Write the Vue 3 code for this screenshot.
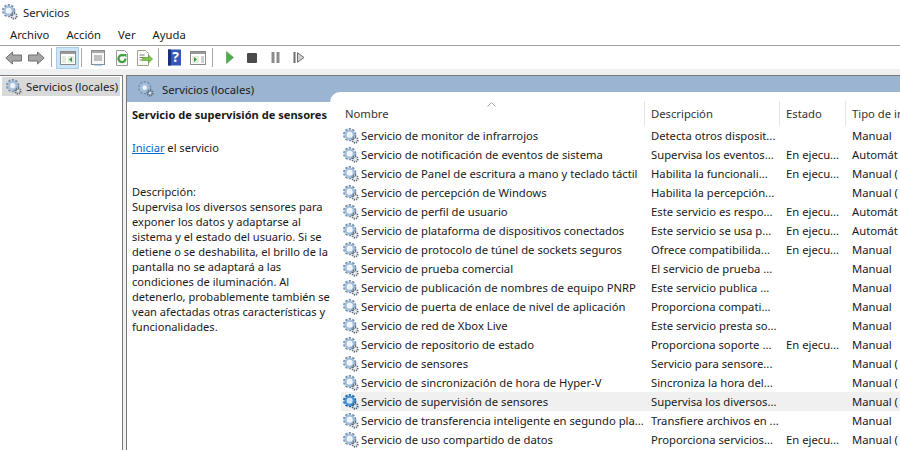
<template>
  <div class="window">
    <svg class="sprite" width="0" height="0">
      <defs>
        <symbol id="gear" viewBox="0 0 18 18">
          <circle cx="7.5" cy="7.5" r="6" fill="none" stroke="#7891a8" stroke-width="3" stroke-dasharray="2.4 1.4" />
          <circle cx="7.5" cy="7.5" r="4.6" fill="none" stroke="#a3bfdc" stroke-width="2.600" />
          <circle cx="7.5" cy="7.5" r="2.6" fill="#eef4fa" />
          <circle cx="13.5" cy="13.5" r="3" fill="none" stroke="#5f6b76" stroke-width="2.200" stroke-dasharray="1.4 0.9" />
          <circle cx="13.5" cy="13.5" r="1.2" fill="#e6e9ec" />
        </symbol>
        <symbol id="gear-on" viewBox="0 0 18 18">
          <circle cx="7.5" cy="7.5" r="6" fill="none" stroke="#1f69ab" stroke-width="3" stroke-dasharray="2.4 1.4" />
          <circle cx="7.5" cy="7.5" r="4.6" fill="none" stroke="#4a94d2" stroke-width="2.600" />
          <circle cx="7.5" cy="7.5" r="2.6" fill="#cfe4f6" />
          <circle cx="13.5" cy="13.5" r="3" fill="none" stroke="#3c5f80" stroke-width="2.200" stroke-dasharray="1.4 0.9" />
          <circle cx="13.5" cy="13.5" r="1.2" fill="#e6e9ec" />
        </symbol>
      </defs>
    </svg>

    <div class="titlebar">
      <svg class="icon"><use href="#gear" /></svg>
      <span>Servicios</span>
    </div>

    <div class="menubar">
      <span v-for="m in menus" :key="m">{{ m }}</span>
    </div>

    <div class="toolbar">
      <svg class="back" width="17" height="14" viewBox="0 0 17 14"><path d="M.8 7 7.500 1v3h9v6h-9v3z" fill="#a6a6a6" stroke="#707070" /></svg>
      <svg class="forward" width="17" height="14" viewBox="0 0 17 14"><path d="M16.200 7 9.500 1v3h-9v6h9v3z" fill="#a6a6a6" stroke="#707070" /></svg>
      <i class="sep after-nav"></i>
      <span class="tb-active">
        <svg width="16" height="14" viewBox="0 0 16 14"><rect x=".5" y=".5" width="15" height="13" fill="#fff" stroke="#8a8a8a" /><rect x="1" y="1" width="14" height="2" fill="#9a9a9a" /><path d="M2 5h4v7H2zM8 5h6v7H8z" fill="#e4ecdc" /><path d="M12 6v5L9 8.500z" fill="#3c9a3c" /></svg>
      </span>
      <i class="sep after-active"></i>
      <svg class="doc" width="16" height="16" viewBox="0 0 16 16"><rect x="1.500" y=".5" width="13" height="14" fill="#f6f6f6" stroke="#8a8a8a" /><rect x="2" y="1" width="12" height="2" fill="#aaa" /><path d="M4 6h8M4 8h8M4 10h8" stroke="#8a8a8a" /><path d="M4 15h8" stroke="#6fa6d6" /></svg>
      <svg class="refresh" width="14" height="16" viewBox="0 0 14 16"><path d="M1.500.5h8l3 3v12h-11z" fill="#fafafa" stroke="#9a9a9a" /><path d="M10.500 8.500a3.500 3.500 0 1 1-1.200-2.600" fill="none" stroke="#3f9f3f" stroke-width="2.200" /><path d="M7.500 4h4v3.500z" fill="#3f9f3f" /></svg>
      <svg class="export" width="17" height="16" viewBox="0 0 17 16"><path d="M1.500.5h8l3 3v12h-11z" fill="#fafafa" stroke="#a8a27c" /><path d="M3.500 5h5M3.500 7.500h5M3.500 10h3" stroke="#7d7d7d" /><path d="M6.500 7.500h6V5l4 4-4 4v-2.500h-6z" fill="#7cc24a" stroke="#4d9a2a" stroke-width=".6" /></svg>
      <i class="sep after-export"></i>
      <svg class="help" width="15" height="17" viewBox="0 0 15 17"><rect y=".5" x="1" width="13" height="16" fill="#3557b8" /><rect x="1" y=".5" width="3" height="16" fill="#1c2f78" /><text x="8.500" y="13">?</text></svg>
      <svg class="panel" width="16" height="14" viewBox="0 0 16 14"><rect x=".5" y=".5" width="15" height="13" fill="#fff" stroke="#8a8a8a" /><rect x="1" y="1" width="14" height="2" fill="#9a9a9a" /><path d="M2 5h7v7H2z" fill="#e4ecdc" /><path d="M11 5h3v7h-3z" fill="#cfcfcf" /><path d="M4 6v5l3-2.500z" fill="#3c9a3c" /></svg>
      <i class="sep after-panel"></i>
      <svg class="play" width="8" height="13" viewBox="0 0 8 13"><path d="M.5.500v12l7-6z" fill="#4fae4a" stroke="#3c8a38" stroke-width=".5" /></svg>
      <svg class="stop" width="10" height="10" viewBox="0 0 10 10"><rect width="10" height="10" rx="1" fill="#4a4a4a" /></svg>
      <svg class="pause" width="9" height="11" viewBox="0 0 9 11"><path d="M.5 0h3v11h-3zM5.500 0h3v11h-3z" fill="#8c8c8c" /></svg>
      <svg class="resume" width="12" height="11" viewBox="0 0 12 11"><path d="M.5 0h2v11h-2z" fill="#6e6e6e" /><path d="M4.500.7v9.600l6.500-4.800z" fill="#cfcfcf" stroke="#6e6e6e" /></svg>
    </div>

    <div class="workspace">
      <aside class="tree">
        <div class="tree-item">
          <svg class="icon"><use href="#gear" /></svg>
          <span>Servicios (locales)</span>
        </div>
      </aside>

      <section class="main">
        <header class="main-head">
          <svg class="icon"><use href="#gear" /></svg>
          <span>Servicios (locales)</span>
        </header>
        <div class="main-body">
          <div class="detail">
            <h2>Servicio de supervisión de sensores</h2>
            <p class="action"><a>Iniciar</a> el servicio</p>
            <p class="desc">
              <span v-for="line in description" :key="line">{{ line }}</span>
            </p>
          </div>
          <div class="list">
            <div class="row head">
              <div class="col-name">
                Nombre
                <svg class="sort-mark" width="9" height="5" viewBox="0 0 9 5"><path d="M.5 4.500 4.500.5l4 4" fill="none" stroke="#a8a8a8" /></svg>
              </div>
              <div class="col-desc">Descripción</div>
              <div class="col-state">Estado</div>
              <div class="col-type">Tipo de inicio</div>
            </div>
            <div v-for="s in services" :key="s[0]" class="row" :class="{ selected: s[0] === selectedName }">
              <div class="col-name">
                <svg class="icon"><use :href="s[0] === selectedName ? '#gear-on' : '#gear'" /></svg>
                <span>{{ s[0] }}</span>
              </div>
              <div class="col-desc">{{ s[1] }}</div>
              <div class="col-state">{{ s[2] }}</div>
              <div class="col-type">{{ s[3] }}</div>
            </div>
          </div>
        </div>
      </section>
    </div>
  </div>
</template>

<script setup>
const menus = ['Archivo', 'Acción', 'Ver', 'Ayuda']
const selectedName = 'Servicio de supervisión de sensores'

const description = [
  'Descripción:',
  'Supervisa los diversos sensores para',
  'exponer los datos y adaptarse al',
  'sistema y el estado del usuario. Si se',
  'detiene o se deshabilita, el brillo de la',
  'pantalla no se adaptará a las',
  'condiciones de iluminación. Al',
  'detenerlo, probablemente también se',
  'vean afectadas otras características y',
  'funcionalidades.'
]

const run = 'En ejecu...'
const services = [
  ['Servicio de monitor de infrarrojos', 'Detecta otros disposit...', '', 'Manual'],
  ['Servicio de notificación de eventos de sistema', 'Supervisa los eventos...', run, 'Automát'],
  ['Servicio de Panel de escritura a mano y teclado táctil', 'Habilita la funcionali...', run, 'Manual ('],
  ['Servicio de percepción de Windows', 'Habilita la percepción...', '', 'Manual ('],
  ['Servicio de perfil de usuario', 'Este servicio es respo...', run, 'Automát'],
  ['Servicio de plataforma de dispositivos conectados', 'Este servicio se usa p...', run, 'Automát'],
  ['Servicio de protocolo de túnel de sockets seguros', 'Ofrece compatibilida...', run, 'Manual'],
  ['Servicio de prueba comercial', 'El servicio de prueba ...', '', 'Manual'],
  ['Servicio de publicación de nombres de equipo PNRP', 'Este servicio publica ...', '', 'Manual'],
  ['Servicio de puerta de enlace de nivel de aplicación', 'Proporciona compati...', '', 'Manual'],
  ['Servicio de red de Xbox Live', 'Este servicio presta so...', '', 'Manual'],
  ['Servicio de repositorio de estado', 'Proporciona soporte ...', run, 'Manual'],
  ['Servicio de sensores', 'Servicio para sensore...', '', 'Manual ('],
  ['Servicio de sincronización de hora de Hyper-V', 'Sincroniza la hora del...', '', 'Manual ('],
  ['Servicio de supervisión de sensores', 'Supervisa los diversos...', '', 'Manual ('],
  ['Servicio de transferencia inteligente en segundo pla...', 'Transfiere archivos en ...', '', 'Manual'],
  ['Servicio de uso compartido de datos', 'Proporciona servicios...', run, 'Manual (']
]
</script>

<style scoped>
.window {
  width: 900px;
  height: 450px;
  overflow: hidden;
  display: flex;
  flex-direction: column;
  background: #fff;
  color: #1a1a1a;
  font-family: "Noto Sans", "Open Sans", sans-serif;
  font-size: 11.25px;
}

.sprite {
  position: absolute;
}

.icon {
  width: 16px;
  height: 16px;
  flex: none;
}

.titlebar {
  height: 24px;
  display: flex;
  align-items: center;
  gap: 5px;
  padding-left: 2px;
}

.menubar {
  height: 21px;
  display: flex;
  align-items: center;
  gap: 17px;
  padding-left: 10px;
  border-bottom: 1px solid #a0a0a0;
}

.toolbar {
  height: 23px;
  display: flex;
  align-items: center;
  padding-left: 5px;
  background: #fff;
}

.toolbar svg,
.toolbar span,
.toolbar i {
  flex: none;
}

.forward { margin-left: 6px; }
.doc { margin-left: 8px; }
.refresh { margin-left: 9px; }
.export { margin-left: 7px; }
.help { margin-left: 8px; }
.panel { margin-left: 8px; }
.play { margin-left: 13px; }
.stop { margin-left: 13px; }
.pause { margin-left: 14px; }
.resume { margin-left: 13px; }

.sep {
  width: 1px;
  height: 19px;
  background: #a8a8a8;
}

.after-nav { margin-left: 6px; }
.after-active { margin-left: 2px; }
.after-export { margin-left: 5px; }
.after-panel { margin-left: 6px; }

.tb-active {
  width: 23px;
  height: 22px;
  margin-left: 4px;
  display: flex;
  align-items: center;
  justify-content: center;
  background: #cce4f7;
  border: 1px solid #a8cde8;
  box-sizing: border-box;
}

.help text {
  fill: #fff;
  font-size: 14px;
  font-weight: 700;
  text-anchor: middle;
}

.workspace {
  flex: 1;
  display: flex;
  gap: 3px;
  padding-top: 6px;
  background: #f0f0f0;
  min-height: 0;
}

.tree {
  width: 123px;
  flex: none;
  box-sizing: border-box;
  background: #fff;
  border: 1px solid #7a7a7a;
  border-width: 1px 1px 0 0;
  padding: 1px 2px 0 2px;
}

.tree-item {
  height: 19px;
  display: flex;
  align-items: center;
  gap: 4px;
  padding-left: 4px;
  background: #d9d9d9;
  white-space: nowrap;
}

.main {
  flex: 1;
  min-width: 0;
  display: flex;
  flex-direction: column;
  border: 1px solid #7a7a7a;
  border-width: 1px 0 0 1px;
  background: #fff;
}

.main-head {
  height: 26px;
  flex: none;
  display: flex;
  align-items: center;
  gap: 8px;
  padding-left: 11px;
  background: #9ab4d1;
}

.main-body {
  flex: 1;
  display: flex;
  min-height: 0;
}

.detail {
  width: 203px;
  flex: none;
  box-sizing: border-box;
  padding: 5px 0 0 5px;
  font-size: 11.1px;
  line-height: 15px;
}

.detail h2 {
  margin: 0;
  font-size: 11.1px;
  font-weight: 700;
  white-space: nowrap;
}

.action {
  margin: 18px 0 0;
}

.action a {
  color: #0066cc;
  text-decoration: underline;
}

.desc {
  margin: 29px 0 0;
}

.desc span {
  display: block;
  white-space: nowrap;
}

.list {
  flex: 1;
  min-width: 0;
  margin-top: -10px;
  padding-top: 9px;
  background: #fff;
  border-top-left-radius: 10px;
}

.row {
  height: 19px;
  display: flex;
  align-items: center;
  white-space: nowrap;
}

.row.head {
  height: 25px;
  color: #333;
}

.row.head > div {
  height: 100%;
  display: flex;
  align-items: center;
  border-right: 1px solid #e5e5e5;
}

.row.head > div:last-child {
  border-right: 0;
}

.row.head .col-name {
  position: relative;
  padding-left: 15px;
  overflow: visible;
}

.sort-mark {
  position: absolute;
  left: 157px;
  top: 1px;
}

.row.selected {
  background: #f0f0f0;
  margin-left: 11px;
}

.col-name {
  width: 315px;
  flex: none;
  box-sizing: border-box;
  display: flex;
  align-items: center;
  gap: 2px;
  padding-left: 13px;
  overflow: hidden;
}

.row.selected .col-name {
  width: 304px;
  padding-left: 2px;
}

.col-desc {
  width: 135px;
  flex: none;
  box-sizing: border-box;
  padding-left: 6px;
}

.col-state {
  width: 66px;
  flex: none;
  box-sizing: border-box;
  padding-left: 6px;
}

.col-type {
  flex: none;
  padding-left: 6px;
}
</style>

<style>
html, body {
  margin: 0;
  background: #fff;
}
</style>
